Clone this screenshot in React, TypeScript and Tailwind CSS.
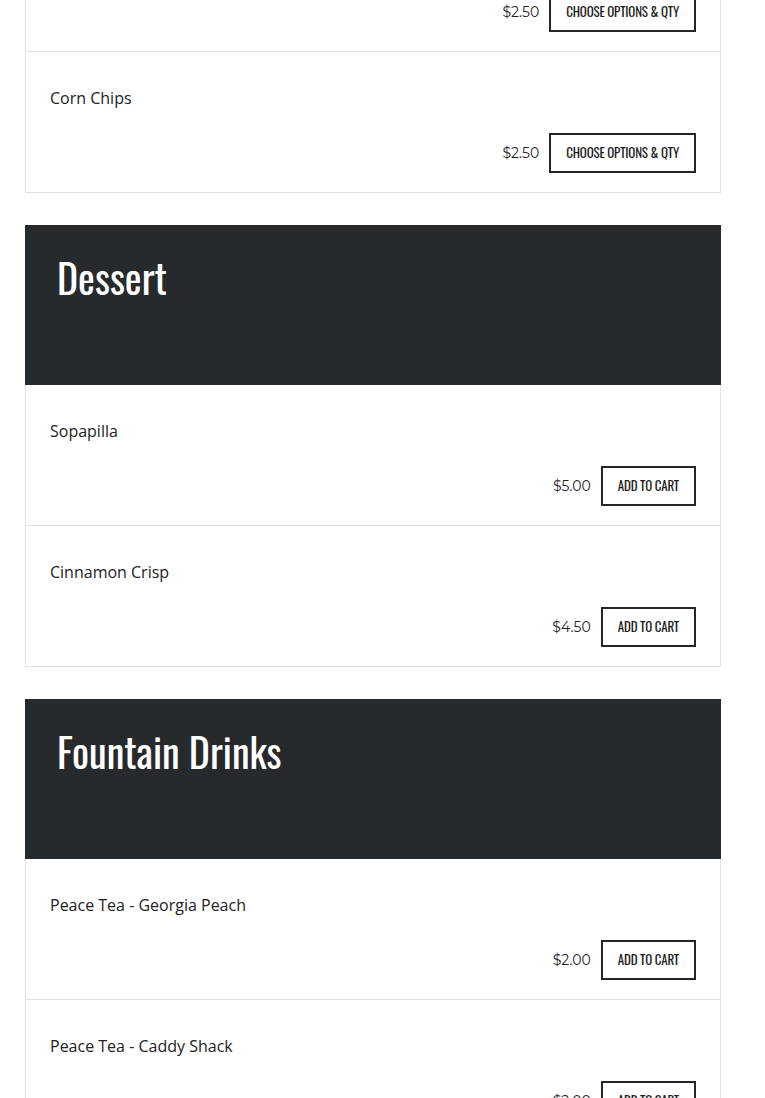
import React from 'react';

type Item = { name: string; price: string; options?: boolean };
type Section = { title?: string; items: Item[] };

const SECTIONS: Section[] = [
  {
    items: [
      { name: 'Chips', price: '$2.50', options: true },
      { name: 'Corn Chips', price: '$2.50', options: true },
    ],
  },
  {
    title: 'Dessert',
    items: [
      { name: 'Sopapilla', price: '$5.00' },
      { name: 'Cinnamon Crisp', price: '$4.50' },
    ],
  },
  {
    title: 'Fountain Drinks',
    items: [
      { name: 'Peace Tea - Georgia Peach', price: '$2.00' },
      { name: 'Peace Tea - Caddy Shack', price: '$2.00' },
    ],
  },
];

const condensed = "font-['Oswald','Liberation_Sans_Narrow','DejaVu_Sans_Condensed',sans-serif]";

function MenuRow({ item }: { item: Item }) {
  return (
    <div className="h-[141px] flex flex-col justify-between border-b border-[#e3e3e3] pt-[34px] pb-[19px] pl-6 pr-6">
      <div className="font-['Open_Sans',sans-serif] text-[16px] leading-6 text-[#222]">{item.name}</div>
      <div className="flex items-center justify-end gap-[10px]">
        <span className="font-['Montserrat','Inter',sans-serif] text-[14px] text-[#222]">{item.price}</span>
        <button
          className={`h-[40px] border-2 border-[#262626] bg-white px-[15px] ${condensed} text-[13px] uppercase tracking-[-0.2px] text-[#1c1c1c]`}
        >
          {item.options ? 'Choose Options & Qty' : 'Add to Cart'}
        </button>
      </div>
    </div>
  );
}

export default function App() {
  return (
    <div className="bg-white min-h-[1098px] overflow-hidden">
      <div className="w-[696px] ml-[25px] -mt-[89px]">
        {SECTIONS.map((section, i) => (
          <div key={i} className={i > 0 ? 'mt-[32px]' : ''}>
            {section.title && (
              <div className="h-[160px] bg-[#272a2d] pl-8 pt-[28px]">
                <h2 className={`${condensed} text-[40px] leading-[48px] text-white`}>{section.title}</h2>
              </div>
            )}
            <div className="border-x border-[#e3e3e3]">
              {section.items.map((item) => (
                <MenuRow key={item.name} item={item} />
              ))}
            </div>
          </div>
        ))}
      </div>
    </div>
  );
}
